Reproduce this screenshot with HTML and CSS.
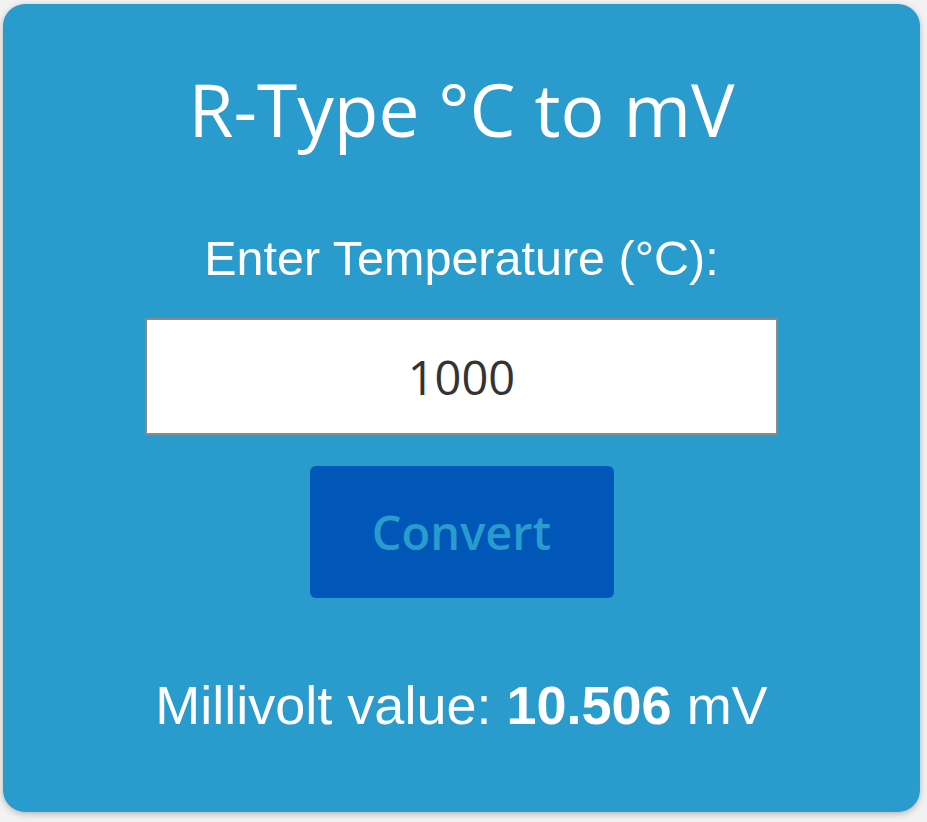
FILE: index.html
```html
<!doctype html>
<html lang="en">

<head>
  <meta charset="utf-8">
  <meta name="viewport" content="width=device-width, initial-scale=1">
  <link rel="stylesheet" href="styles.css">
  <title>R-Type °C to mV</title>
</head>

<body>
  <div class="card">
    <h1 class="title">R-Type °C to mV</h1>
    <label class="label" for="temp_input">Enter Temperature (°C):</label>
    <input id="temp_input" class="temp-input" type="text" value="1000">
    <button id="convert_button" class="convert">Convert</button>
    <div class="result">Millivolt value: <b id="result_value">10.506</b> mV</div>
  </div>
</body>

</html>
```

FILE: styles.css
```css
body {
  margin: 0;
  padding: 4px 7px 10px 3px;
  background-color: #f2f2f2;
  font-family: "Liberation Sans", Arial, sans-serif;
  color: #fff;
}

.card {
  display: flex;
  flex-direction: column;
  align-items: center;
  height: 808px;
  box-sizing: border-box;
  padding-top: 62px;
  background-color: #2a9bcd;
  border-radius: 22px;
  box-shadow: 0 2px 6px rgba(0, 0, 0, 0.25);
}

.title {
  margin: 0;
  font-family: "Open Sans", sans-serif;
  font-weight: 400;
  font-size: 73px;
  line-height: 86px;
}

.label {
  margin-top: 78px;
  font-size: 48.5px;
  line-height: 56px;
}

.temp-input {
  margin-top: 32px;
  width: 633px;
  height: 117px;
  box-sizing: border-box;
  border: 2px solid #8a8a8a;
  background: #fff;
  text-align: center;
  font-family: "Open Sans", sans-serif;
  font-size: 47px;
  color: #333;
  outline: none;
}

.convert {
  margin-top: 31px;
  width: 304px;
  height: 132px;
  border: none;
  border-radius: 6px;
  background-color: #0057b8;
  color: #2a9bcd;
  font-family: "Open Sans", sans-serif;
  font-weight: 600;
  font-size: 47px;
}

.result {
  margin-top: 77px;
  font-size: 54px;
  line-height: 60px;
}
```
